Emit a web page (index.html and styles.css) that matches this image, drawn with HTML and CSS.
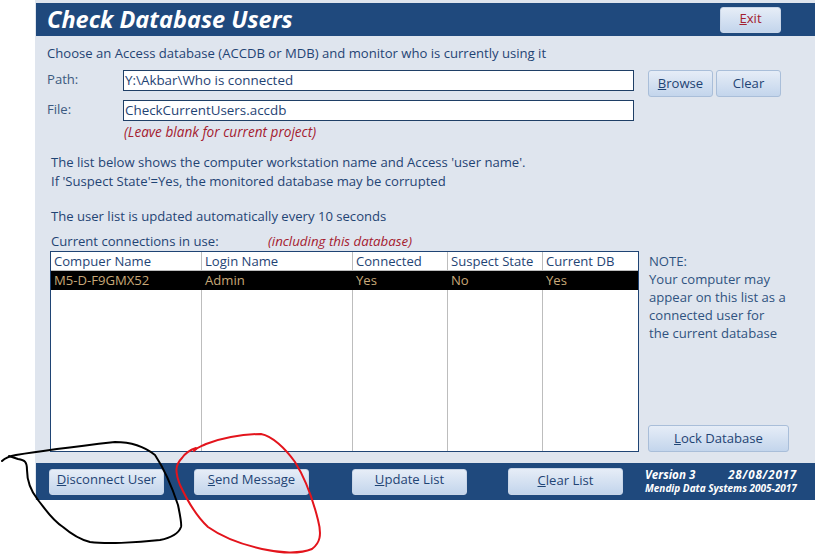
FILE: index.html
```html
<!DOCTYPE html>
<html lang="en">
<head>
<meta charset="utf-8">
<title>Check Database Users</title>
<link rel="stylesheet" href="styles.css">
</head>
<body>
<div class="page">
  <main class="form">
    <header class="head">
      <h1>Check Database Users</h1>
      <button class="btn exit"><u>E</u>xit</button>
    </header>
    <section class="body">
      <p class="intro">Choose an Access database (ACCDB or MDB) and monitor who is currently using it</p>
      <div class="paths">
        <div class="fields">
          <div class="field"><label>Path:</label><div class="input">Y:\Akbar\Who is connected</div></div>
          <div class="field"><label>File:</label><div class="input">CheckCurrentUsers.accdb</div></div>
          <p class="hint">(Leave blank for current project)</p>
        </div>
        <div class="pathbtns">
          <button class="btn browse"><u>B</u>rowse</button>
          <button class="btn clear">Clear</button>
        </div>
      </div>
      <div class="info">
        <p>The list below shows the computer workstation name and Access 'user name'.</p>
        <p>If 'Suspect State'=Yes, the monitored database may be corrupted</p>
        <p class="updated">The user list is updated automatically every 10 seconds</p>
      </div>
      <div class="caption"><span>Current connections in use:</span><em>(including this database)</em></div>
      <div class="listrow">
        <div class="list">
          <div class="col c1"><div class="th">Compuer Name</div><div class="td">M5-D-F9GMX52</div></div>
          <div class="col c2"><div class="th">Login Name</div><div class="td">Admin</div></div>
          <div class="col c3"><div class="th">Connected</div><div class="td">Yes</div></div>
          <div class="col c4"><div class="th">Suspect State</div><div class="td">No</div></div>
          <div class="col c5"><div class="th">Current DB</div><div class="td">Yes</div></div>
        </div>
        <aside class="side">
          <p class="note">NOTE:<br>Your computer may appear on this list as a connected user for<br>the current database</p>
          <button class="btn lock"><u>L</u>ock Database</button>
        </aside>
      </div>
    </section>
    <footer class="foot">
      <button class="btn fb disconnect"><u>D</u>isconnect User</button>
      <button class="btn fb send"><u>S</u>end Message</button>
      <button class="btn fb update"><u>U</u>pdate List</button>
      <button class="btn fb clearlist"><u>C</u>lear List</button>
      <div class="version">
        <div class="v1"><span>Version 3</span><span class="date">28/08/2017</span></div>
        <div class="v2">Mendip Data Systems 2005-2017</div>
      </div>
    </footer>
  </main>
  <svg class="ink" width="815" height="554" viewBox="0 0 815 554" aria-hidden="true">
    <path class="black" d="M2 461 C6 457 10 456 16 455 C40 451 80 446 115 442 C130 442 145 447 155 455 C165 470 172 487 178 505 C180 515 182 524 181 527 C178 535 170 538 160 540 C135 543 105 544 90 542 C78 539 70 533 63 527 C52 520 46 510 38 500 C30 490 27 480 27 470 C27 462 25 460 18 459 L9 456"/>
    <path class="red" d="M194 451 C197 447 200 447 206 444 C225 437 245 434 261 434 C272 436 285 448 295 462 C305 478 313 500 318 520 C322 535 320 543 312 549 C300 554 280 553 262 549 C240 544 222 537 208 527 C195 515 187 500 180 485 C175 472 175 465 182 458 C186 452 190 450 196 448"/>
  </svg>
</div>
</body>
</html>
```
FILE: styles.css
```css
* { box-sizing: border-box; }
html, body { margin: 0; padding: 0; background: #fff; }
body { font-family: "Open Sans", "Noto Sans", sans-serif; font-size: 13.1px; color: #1f4474; overflow: hidden; }
p { margin: 0; }
.page { position: relative; width: 815px; height: 554px; overflow: hidden; }
.form { margin-left: 35px; width: 780px; height: 500px; background: #dfe5ee; padding-top: 3px; display: flex; flex-direction: column; }

.head { height: 33px; margin-left: 1px; background: #1f497d; display: flex; align-items: center; justify-content: space-between; padding: 0 34px 0 11px; }
.head h1 { margin: 0; font-family: "Open Sans", sans-serif; font-size: 23.5px; line-height: 33px; font-weight: 700; font-style: italic; color: #fff; }

.btn { font-family: "Open Sans", "Noto Sans", sans-serif; font-size: 13.1px; color: #1f4474; padding: 0 0 2px; height: 27px; border: 1px solid #a9bed9; border-radius: 3px; background: linear-gradient(#e6edf7, #c3d5ec); display: block; }
.exit { width: 61px; height: 26px; color: #a3202f; border-color: #c9d6e8; padding-bottom: 4px; }

.body { height: 427px; padding: 9px 0 0 12px; position: relative; }
.intro { line-height: 17px; }
.paths { display: flex; margin-top: 8px; }
.fields { width: 587px; }
.field { display: flex; height: 21px; margin-bottom: 9px; }
.field label { width: 76px; line-height: 19px; color: #3c5a80; }
.input { width: 511px; height: 21px; border: 1px solid #1f3f66; background: #fff; padding-left: 1px; line-height: 19px; color: #1f4474; font-size: 13.4px; }
.hint { margin: -7px 0 0 77px; line-height: 17px; color: #a5202e; font-style: italic; font-size: 13.6px; }
.pathbtns { display: flex; gap: 3px; margin-left: 14px; }
.browse { width: 65px; }
.clear { width: 65px; }

.info { margin: 13px 0 0 4px; line-height: 19px; }
.updated { margin-top: 16px; }

.caption { margin: 7px 0 0 4px; display: flex; line-height: 17px; height: 18px; }
.caption span { width: 217px; }
.caption em { color: #a5202e; font-weight: 500; font-size: 13.3px; }

.listrow { display: flex; margin-left: 3px; }
.list { width: 589px; height: 201px; border: 1px solid #1f4474; background: #fff; display: flex; }
.col { border-left: 1px solid #bdbdbd; }
.col:first-child { border-left: 0; }
.c1 { width: 150px; }
.c2 { width: 151px; }
.c3 { width: 95px; }
.c4 { width: 95px; }
.c5 { width: 96px; }
.th { height: 19px; line-height: 18px; padding-left: 3px; border-bottom: 1px solid #bdbdbd; color: #1f4474; white-space: nowrap; }
.td { height: 19px; line-height: 19px; background: #000; color: #c8a878; margin-left: -1px; padding-left: 4px; }
.col:first-child .td { margin-left: 0; padding-left: 3px; }

.side { width: 141px; margin-left: 9px; height: 201px; display: flex; flex-direction: column; justify-content: space-between; }
.note { line-height: 18px; color: #2f5380; margin: 1px 0 0 1px; }
.lock { width: 141px; height: 27px; }

.foot { height: 37px; margin-left: 1px; background: #1f497d; display: flex; align-items: center; position: relative; }
.fb { width: 115px; height: 26px; border-color: #c9d6e8; padding-bottom: 5px; }
.disconnect { margin-left: 13px; }
.send { margin-left: 30px; }
.update { margin-left: 43px; }
.clearlist { margin-left: 41px; height: 27px; padding-bottom: 3px; }
.version { margin-left: 22px; width: 152px; color: #fff; font-weight: 700; font-style: italic; }
.v1 { display: flex; justify-content: space-between; font-size: 11.6px; line-height: 14px; }
.date { letter-spacing: 0.8px; }
.v2 { font-size: 10px; line-height: 13px; white-space: nowrap; }

.ink { position: absolute; left: 0; top: 0; pointer-events: none; }
.ink path { fill: none; stroke-width: 2; stroke-linecap: round; stroke-linejoin: round; }
.black { stroke: #000; }
.red { stroke: #e3141c; }
```
